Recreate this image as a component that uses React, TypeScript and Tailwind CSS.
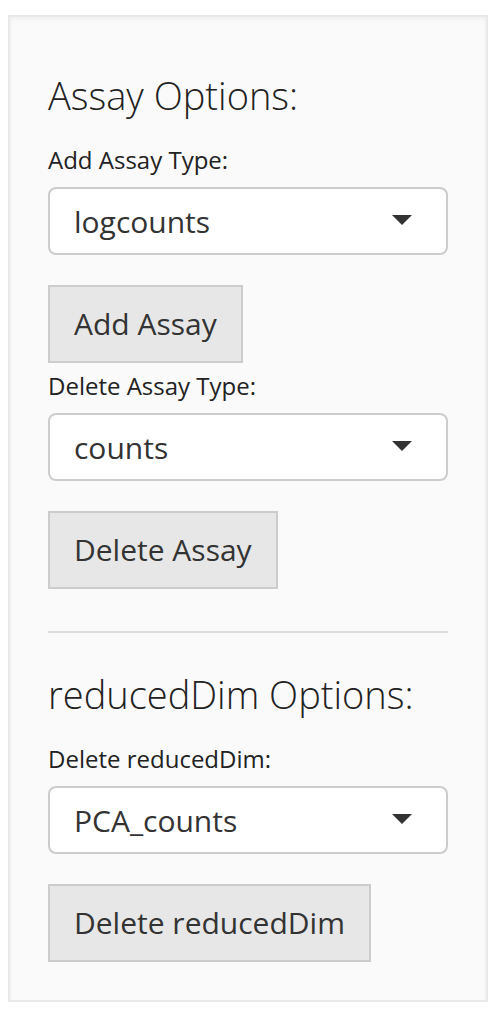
import { useId } from "react";

type FieldProps = {
  label: string;
  options: string[];
  action: string;
};

function SelectWithAction({ label, options, action }: FieldProps) {
  const id = useId();
  return (
    <div className="flex flex-col items-start">
      <label htmlFor={id} className="mb-[10px] text-[24px] leading-[34px] text-[#222222]">
        {label}
      </label>
      <div className="relative mb-[30px] w-full">
        <select
          id={id}
          className="block h-[68px] w-full appearance-none rounded-lg border-2 border-[#cccccc] bg-white pt-[2px] pr-16 pl-6 text-[30px] leading-[42px] text-[#333333]"
        >
          {options.map((option) => (
            <option key={option}>{option}</option>
          ))}
        </select>
        <svg
          aria-hidden="true"
          viewBox="0 0 20 10"
          className="pointer-events-none absolute top-7 right-9 h-[10px] w-5 fill-[#333333]"
        >
          <path d="M0 0h20L10 10z" />
        </svg>
      </div>
      <button
        type="button"
        className="h-[78px] border-2 border-[#cccccc] bg-[#e7e7e7] px-6 text-[30px] leading-[42px] text-[#333333]"
      >
        {action}
      </button>
    </div>
  );
}

function Heading({ children }: { children: string }) {
  return (
    <h2 className="mb-[27px] text-[38px] leading-[42px] font-light text-[#222222]">{children}</h2>
  );
}

export default function App() {
  return (
    <main className="bg-white pt-[15px] pr-4 pb-4 pl-2 font-['Open_Sans','Noto_Sans',sans-serif]">
      <form
        className="border-2 border-[#e8e8e8] bg-[#fafafa] px-[38px] pt-[57px] pb-[38px] shadow-[inset_0_2px_4px_rgba(0,0,0,0.05)]"
        onSubmit={(event) => event.preventDefault()}
      >
        <section>
          <Heading>Assay Options:</Heading>
          <div className="flex flex-col gap-[6px]">
            <SelectWithAction
              label="Add Assay Type:"
              options={["logcounts"]}
              action="Add Assay"
            />
            <SelectWithAction
              label="Delete Assay Type:"
              options={["counts"]}
              action="Delete Assay"
            />
          </div>
        </section>
        <hr className="mt-[42px] mb-10 border-t-2 border-[#dddddd]" />
        <section>
          <Heading>reducedDim Options:</Heading>
          <SelectWithAction
            label="Delete reducedDim:"
            options={["PCA_counts"]}
            action="Delete reducedDim"
          />
        </section>
      </form>
    </main>
  );
}
